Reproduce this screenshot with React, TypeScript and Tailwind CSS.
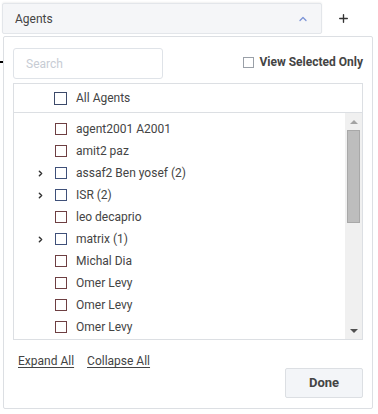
import { ChevronUp, ChevronRight, Plus } from "lucide-react";

type Row = { name: string; group?: boolean };

const rows: Row[] = [
  { name: "agent2001 A2001" },
  { name: "amit2 paz" },
  { name: "assaf2 Ben yosef (2)", group: true },
  { name: "ISR (2)", group: true },
  { name: "leo decaprio" },
  { name: "matrix (1)", group: true },
  { name: "Michal Dia" },
  { name: "Omer Levy" },
  { name: "Omer Levy" },
  { name: "Omer Levy" },
];

export default function App() {
  return (
    <div
      className="relative h-[414px] w-[378px] overflow-hidden bg-white text-[#444]"
      style={{ fontFamily: "Roboto, 'Liberation Sans', sans-serif" }}
    >
      {/* bits of the page underneath the popup */}
      <div className="absolute left-0 top-[61px] h-[2px] w-[3px] bg-black" />

      <div className="flex items-center pl-[2px] pt-[3px]">
        <div className="flex h-[31px] w-[320px] items-center justify-between rounded-[2px] border border-[#e3e6ea] bg-[#f5f6f8] pl-[12px] pr-[12px] shadow-[0_-1px_2px_rgba(0,0,0,0.06)]">
          <span className="text-[12px] text-[#444]">Agents</span>
          <ChevronUp size={12} strokeWidth={2.5} className="text-[#7b93d6]" />
        </div>
        <Plus size={13} strokeWidth={2.5} className="ml-[15px] text-[#333]" />
      </div>

      <div className="ml-[3px] mt-[2px] h-[373px] w-[370px] rounded-[2px] border border-[#dcdfe3] bg-white px-[9px] pt-[11px]">
        <div className="flex items-start justify-between">
          <div className="flex h-[31px] w-[150px] items-center rounded-[3px] border border-[#dfe3e8] px-[12px] text-[12px] text-[#c7ccd4]">
            Search
          </div>
          <div className="mt-[5px] flex items-center gap-[5px]">
            <span className="h-[11px] w-[11px] border border-[#9aa0a8]" />
            <span className="text-[12px] font-bold text-[#444]">View Selected Only</span>
          </div>
        </div>

        <div className="mt-[4px] w-[350px] border border-[#dcdfe3]">
          <div className="flex h-[29px] items-center border-b border-[#dcdfe3] pl-[40px]">
            <span className="h-[13px] w-[13px] border-[1.5px] border-[#3c4a6a]" />
            <span className="ml-[9px] text-[12px] text-[#444]">All Agents</span>
          </div>
          <div className="flex h-[226px]">
            <div className="flex-1 pt-[5px]">
              {rows.map((r, i) => (
                <div key={i} className="flex h-[22px] items-center">
                  <div className="flex w-[41px] justify-end pr-[10px]">
                    {r.group && <ChevronRight size={9} strokeWidth={4} className="text-[#333]" />}
                  </div>
                  <span
                    className={
                      r.group
                        ? "h-[12px] w-[12px] border-[1.5px] border-[#3f5079]"
                        : "h-[12px] w-[12px] border-[1.5px] border-[#6e3f42]"
                    }
                  />
                  <span className="ml-[9px] text-[12px] text-[#444]">{r.name}</span>
                </div>
              ))}
            </div>
            <div className="flex w-[17px] flex-col items-center bg-[#f0f0f0]">
              <div className="flex h-[17px] items-center justify-center">
                <span className="h-0 w-0 border-x-[4px] border-b-[4px] border-x-transparent border-b-[#a3a3a3]" />
              </div>
              <div className="h-[93px] w-[13px] border border-[#a8a8a8] bg-[#bdbdbd]" />
              <div className="flex-1" />
              <div className="flex h-[17px] items-center justify-center">
                <span className="h-0 w-0 border-x-[4px] border-t-[4px] border-x-transparent border-t-[#505050]" />
              </div>
            </div>
          </div>
        </div>

        <div className="flex gap-[13px] pl-[5px] pt-[12px] text-[12px] text-[#444]">
          <span className="underline underline-offset-2">Expand All</span>
          <span className="underline underline-offset-2">Collapse All</span>
        </div>
        <div className="flex justify-end">
          <div className="mt-[-2px] flex h-[30px] w-[78px] items-center justify-center rounded-[2px] border border-[#dcdfe3] bg-[#f3f5f8] text-[13px] font-bold text-[#444]">
            Done
          </div>
        </div>
      </div>
    </div>
  );
}
